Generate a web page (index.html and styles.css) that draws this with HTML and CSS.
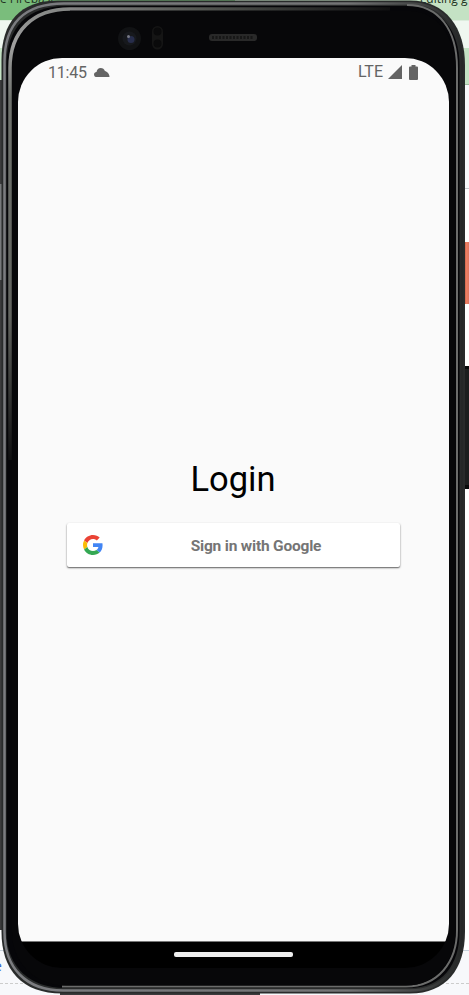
FILE: index.html
```html
<!DOCTYPE html>
<html lang="en">
<head>
<meta charset="utf-8">
<title>Login</title>
<link rel="stylesheet" href="styles.css">
</head>
<body>
<div class="desktop">
  <div class="backdrop">
    <div class="band band-top"><span class="peek-left">ve Firebase</span><span class="peek-right">• Editing g</span></div>
    <div class="band band-pale"></div>
    <div class="band band-green"></div>
    <div class="band band-grey"></div>
    <div class="band band-white"></div>
    <div class="band band-foot"><span class="peek-foot">e</span></div>
  </div>
  <svg class="shell" viewBox="0 0 469 995" aria-hidden="true">
    <defs>
      <linearGradient id="metal" gradientUnits="userSpaceOnUse" x1="0" y1="8" x2="0" y2="460"><stop offset="0" stop-color="#858785"/><stop offset=".08" stop-color="#a0a0a0"/><stop offset=".2" stop-color="#70736e"/><stop offset=".68" stop-color="#62645f"/><stop offset="1" stop-color="#101011"/></linearGradient>
      <linearGradient id="rim" x2="1" y2="0"><stop offset="0" stop-color="#7b7c80"/><stop offset=".75" stop-color="#737475"/><stop offset="1" stop-color="#252727"/></linearGradient>
      <linearGradient id="key" x2="1" y2="0"><stop offset="0" stop-color="#ba563d"/><stop offset=".5" stop-color="#ee7f64"/><stop offset="1" stop-color="#df7760"/></linearGradient>
      <linearGradient id="topshine" x2="1" y2="0"><stop offset="0" stop-color="#858585"/><stop offset=".4" stop-color="#555853"/><stop offset="1" stop-color="#101011"/></linearGradient>
    </defs>
    <path d="M464 242h5v62h-5z" fill="url(#key)"/>
    <path d="M464 366h5v123h-5z" fill="#1c1e1e"/>
    <path d="M464 366h5v3h-5zM464 485h5v4h-5z" fill="#090a0a"/>
    <path d="M0 80h4v850H0zM60 990h200v5H60z" fill="#3b3b3c"/>
    <path d="M0 184h2v96H0z" fill="#77797b"/>
    <path d="M58 .5H410C446 .5 465 28 465 65V932C465 969 446 993.500 410 993.500H62C22 993.500 1.500 970 1.500 932V60C1.500 22 20 .5 58 .5Z" fill="#292b2b"/>
    <path d="M64 3.500H410C444 3.500 462 29 462 65V932C462 967 444 990.500 410 990.500H63C26 990.500 4.500 968 4.500 932V62C4.500 24 24 3.500 64 3.500Z" fill="none" stroke="url(#rim)" stroke-width="2.500"/>
    <path d="M66 6H410C440 6 459.500 30 459.500 65V932C459.500 965 442 988 409 988H65C30 988 6.500 967 6.500 932V65C6.500 27 28 6 66 6Z" fill="#060609"/>
    <path d="M407 5C439 5 457 30 457 68V930C457 962 438 986.500 406 986.500H62" fill="none" stroke="#6b6c6b" stroke-width="2"/>
    <path d="M12 932V70C12 35 35 11 70 11H410C436 11 455.500 36 455.500 68V930C455.500 962 436 985.500 406 985.500H66C34 985.500 12 962 12 932Z" fill="#070709"/>
    <path d="M10 460V68C10 31 33 9 70 9" fill="none" stroke="url(#metal)" stroke-width="3.500"/>
    <path d="M70 7.250H390V10.500H70Z" fill="url(#topshine)"/>
    <circle cx="129.500" cy="38.500" r="11.500" fill="#111214"/>
    <circle cx="129.500" cy="38.500" r="7" fill="#17191d"/>
    <circle cx="131" cy="39.500" r="3.500" fill="#272d4b"/>
    <circle cx="128.500" cy="36.500" r="1.500" fill="#777986"/>
    <rect x="152" y="26" width="11" height="23.500" rx="5.500" fill="#151515"/>
    <circle cx="157.500" cy="31.500" r="4" fill="#0a0a0b"/><circle cx="157.500" cy="43.500" r="4" fill="#0a0a0b"/>
    <rect x="209" y="34" width="48" height="7" rx="3" fill="#292929"/>
    <path d="M212 37.500H254" stroke="#171717" stroke-width="3" stroke-dasharray="2 1.500"/>
  </svg>
  <main class="screen">
    <header class="status">
      <span class="clock">11:45</span>
      <svg class="cloud" width="16" height="9" viewBox="0 0 16 9"><path d="M3 9C1 9 0 8 0 6.400 0 5 1.200 3.900 2.500 3.900 3 1.500 4.500 0 6.700 0c2 0 3.600 1.100 4.200 3C13 3.600 15.500 5.500 15.500 9Z" fill="#646464"/></svg>
      <span class="network">LTE</span>
      <svg class="signal" width="14" height="14" viewBox="0 0 14 14"><path d="M14 0V14H0Z" fill="#646464"/></svg>
      <svg class="battery" width="9" height="15" viewBox="0 0 9 15"><path d="M2.500 0h4v1.500H8q1 0 1 1V14q0 1-1 1H1q-1 0-1-1V2.500q0-1 1-1h1.500Z" fill="#646464"/></svg>
    </header>
    <section class="content">
      <h1>Login</h1>
      <button class="google" type="button">
        <svg class="logo" width="20" height="20" viewBox="0 0 48 48"><path fill="#ea4335" d="M24 9.500c3.540 0 6.710 1.220 9.210 3.600l6.850-6.850C35.900 2.380 30.470 0 24 0 14.620 0 6.510 5.380 2.560 13.220l7.980 6.190C12.430 13.720 17.740 9.500 24 9.500z"/><path fill="#4285f4" d="M46.980 24.550c0-1.570-.15-3.090-.38-4.550H24v9.020h12.940c-.58 2.960-2.260 5.480-4.780 7.180l7.730 6c4.510-4.180 7.090-10.360 7.090-17.650z"/><path fill="#fbbc05" d="M10.530 28.590A14.500 14.500 0 0 1 9.770 24c0-1.600.27-3.140.76-4.590l-7.980-6.190A23.900 23.900 0 0 0 0 24c0 3.880.92 7.540 2.560 10.780z"/><path fill="#34a853" d="M24 48c6.480 0 11.930-2.130 15.890-5.810l-7.730-6c-2.150 1.450-4.920 2.300-8.160 2.300-6.260 0-11.570-4.220-13.470-9.910l-7.980 6.190C6.510 42.620 14.620 48 24 48z"/></svg>
        <span class="label">Sign in with Google</span>
      </button>
    </section>
    <footer class="nav"><div class="handle"></div></footer>
  </main>
</div>
</body>
</html>
```
FILE: styles.css
```css
* { box-sizing: border-box; }
body { margin: 0; font-family: Roboto, sans-serif; }
.desktop { position: relative; width: 469px; height: 995px; padding: 58px 20px 27px 18px; overflow: hidden; }
.backdrop { position: absolute; inset: 0; display: flex; flex-direction: column; }
.band-top { height: 20px; display: flex; justify-content: space-between; background: linear-gradient(90deg, #7abd7c 235px, #c4e2c4 235px); font: 12px/14px "Open Sans", sans-serif; color: #232; white-space: nowrap; overflow: hidden; }
.peek-left { margin: -8px 0 0 -6px; }
.peek-right { width: 57px; margin-top: -8px; }
.band-pale { height: 28px; background: #eff7f0; border-top: 1px solid #dcecdd; }
.band-green { height: 37px; background: #c4e2c4; border-bottom: 1px solid #9fbd9f; }
.band-grey { height: 104px; background: #f8f9fb; border-bottom: 1px solid #c8ccd1; }
.band-white { flex: 1; background: #fff; }
.band-foot { height: 45px; background: #f7f8fb; border-top: 1px solid #c8d2dd; color: #3366cc; font: 14px/20px "Open Sans", sans-serif; }
.band-foot::after { content: ""; display: block; margin-top: 12px; border-top: 1px dashed #ccc; }
.peek-foot { display: block; height: 20px; margin: 5px 0 -5px -6px; }
.shell { position: absolute; inset: 0; width: 469px; height: 995px; }
.screen { position: relative; width: 431px; height: 910px; display: flex; flex-direction: column; overflow: hidden; border-radius: 44px; }
.status { height: 28px; display: flex; align-items: center; padding: 0 31px 0 30px; background: #fafafa; color: #646464; }
.clock { width: 39px; padding-top: 1px; font-size: 16px; line-height: 20px; letter-spacing: -.2px; }
.cloud { margin-left: 7px; }
.network { margin-left: auto; font-size: 16px; line-height: 20px; }
.signal { margin-left: 5px; }
.battery { margin-left: 7px; }
.content { flex: 1; display: flex; flex-direction: column; align-items: center; padding: 372px 1px 0 0; background: #fafafa; }
h1 { margin: 0; font-size: 34.500px; line-height: 43px; font-weight: 400; color: #000; }
.google { width: 333px; height: 44px; margin-top: 22px; padding: 0 17px; display: flex; align-items: center; border: 0; border-radius: 2px; background: #fff; box-shadow: 0 1px 2px rgba(0,0,0,.5), 0 1px 1px rgba(0,0,0,.2); font-family: Roboto, sans-serif; }
.logo { margin-left: -1px; }
.label { flex: 1; padding: 2px 0 0 27px; text-align: center; font-size: 15.500px; font-weight: 700; letter-spacing: -.2px; color: #757575; }
.nav { height: 27px; display: flex; justify-content: center; padding: 10px 1px 0 0; background: #000; border-top: 1px solid #777; }
.handle { width: 119px; height: 5px; border-radius: 2px; background: #eee; }
```
